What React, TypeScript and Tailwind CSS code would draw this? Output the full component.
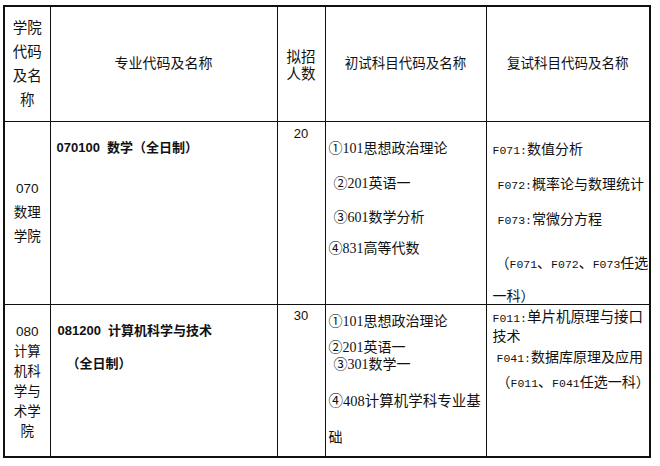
import React from "react";

const td = "border border-[#111] p-0 overflow-hidden";
const sans = "font-['Liberation_Sans','Noto_Sans_CJK_SC',sans-serif]";
const serif = "font-['Liberation_Serif','Noto_Sans_CJK_SC',serif]";

function M({ children }: { children: React.ReactNode }) {
  return <span className="font-['Liberation_Mono',monospace] text-[11.5px] align-baseline">{children}</span>;
}

function L({ h, className = "", children }: { h: string; className?: string; children: React.ReactNode }) {
  return <div className={`${h} overflow-visible whitespace-nowrap ${className}`}>{children}</div>;
}

export default function App() {
  return (
    <div className={`w-[660px] h-[466px] bg-white pt-[5px] pl-[3px] text-[#111] ${sans}`}>
      <table className="table-fixed border-collapse w-[646px] border-2 border-[#111]">
        <colgroup>
          <col className="w-[46px]" />
          <col className="w-[227px]" />
          <col className="w-[48px]" />
          <col className="w-[161px]" />
          <col className="w-[164px]" />
        </colgroup>
        <tbody>
          <tr>
            <td className={`${td} h-[115px] align-middle text-center text-[14.5px] leading-[24px]`}>
              <L h="h-[24px]">学院</L>
              <L h="h-[24px]">代码</L>
              <L h="h-[24px]">及名</L>
              <L h="h-[24px]">称</L>
            </td>
            <td className={`${td} align-middle text-center text-[14px]`}>专业代码及名称</td>
            <td className={`${td} align-middle text-center text-[14.5px] leading-[17px] pt-[5px]`}>
              <L h="h-[17px]">拟招</L>
              <L h="h-[17px]">人数</L>
            </td>
            <td className={`${td} align-middle text-center text-[13.5px]`}>初试科目代码及名称</td>
            <td className={`${td} align-middle text-center text-[13.5px]`}>复试科目代码及名称</td>
          </tr>
          <tr>
            <td className={`${td} h-[183px] align-middle text-center text-[13.5px] leading-[24px]`}>
              <L h="h-[24px]">070</L>
              <L h="h-[24px]">数理</L>
              <L h="h-[24px]">学院</L>
            </td>
            <td className={`${td} align-top text-left pl-[6px] pt-[16px] font-bold text-[13px] leading-[20px]`}>
              <L h="h-[20px]">
                070100<span className="ml-[7px]">数学（全日制）</span>
              </L>
            </td>
            <td className={`${td} align-top text-center pt-[4px] text-[13px] leading-[16px]`}>20</td>
            <td className={`${td} align-top text-left pl-[3px] pt-[19px] text-[14px] leading-[16px] ${serif}`}>
              <L h="h-[16px]">①101思想政治理论</L>
              <L h="h-[16px]" className="mt-[19px] pl-[5px]">②201英语一</L>
              <L h="h-[16px]" className="mt-[18px] pl-[5px]">③601数学分析</L>
              <L h="h-[16px]" className="mt-[15px]">④831高等代数</L>
            </td>
            <td className={`${td} align-top text-left pl-[6px] pt-[19px] text-[14px] leading-[16px]`}>
              <L h="h-[16px]"><M>F071:</M>数值分析</L>
              <L h="h-[16px]" className="mt-[19px] pl-[5px]"><M>F072:</M>概率论与数理统计</L>
              <L h="h-[16px]" className="mt-[19px] pl-[5px]"><M>F073:</M>常微分方程</L>
              <L h="h-[16px]" className="mt-[28px] pl-[3px]">（<M>F071</M>、<M>F072</M>、<M>F073</M>任选</L>
              <L h="h-[16px]" className="mt-[17px]">一科）</L>
            </td>
          </tr>
          <tr>
            <td className={`${td} h-[153px] align-middle text-center text-[13.5px] leading-[20px] pt-[3px]`}>
              <L h="h-[20px]">080</L>
              <L h="h-[20px]">计算</L>
              <L h="h-[20px]">机科</L>
              <L h="h-[20px]">学与</L>
              <L h="h-[20px]">术学</L>
              <L h="h-[20px]">院</L>
            </td>
            <td className={`${td} align-top text-left pl-[7px] pt-[16px] font-bold text-[13px] leading-[20px]`}>
              <L h="h-[20px]">
                081200<span className="ml-[7px]">计算机科学与技术</span>
              </L>
              <L h="h-[20px]" className="mt-[13px] pl-[9px]">（全日制）</L>
            </td>
            <td className={`${td} align-top text-center pt-[3px] text-[13px] leading-[16px]`}>30</td>
            <td className={`${td} align-top text-left pl-[3px] pt-[9px] text-[14px] leading-[16px] ${serif}`}>
              <L h="h-[16px]">①101思想政治理论</L>
              <L h="h-[16px]" className="mt-[10px]">②201英语一</L>
              <L h="h-[16px]" className="mt-[1px] pl-[5px]">③301数学一</L>
              <L h="h-[16px]" className="mt-[20px] text-[14.5px]">④408计算机学科专业基</L>
              <L h="h-[16px]" className="mt-[21px]">础</L>
            </td>
            <td className={`${td} align-top text-left pl-[6px] pt-[4px] text-[14px] leading-[16px]`}>
              <L h="h-[16px]"><M>F011:</M><span className="text-[14.5px]">单片机原理与接口</span></L>
              <L h="h-[16px]" className="mt-[3px]">技术</L>
              <L h="h-[16px]" className="mt-[5px] pl-[4px]"><M>F041:</M>数据库原理及应用</L>
              <L h="h-[16px]" className="mt-[9px] pl-[4px]">（<M>F011</M>、<M>F041</M>任选一科）</L>
            </td>
          </tr>
        </tbody>
      </table>
    </div>
  );
}
